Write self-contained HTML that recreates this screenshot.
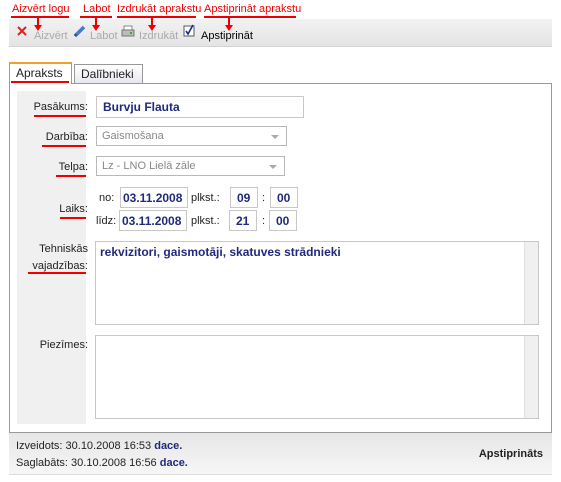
<!DOCTYPE html><html><head><meta charset="utf-8"><style>
*{margin:0;padding:0;box-sizing:border-box}
body{width:561px;height:482px;background:#fff;font-family:"Liberation Sans",sans-serif;font-size:11px;position:relative;overflow:hidden;color:#000}
.a{position:absolute}
.r{color:#e00;font-size:11px}
.ln{background:#e00;height:2px}
.inp{position:absolute;background:#fff;border:1px solid #c8c8c8;color:#1f2a7a;font-weight:bold;font-size:12px;padding:3px 6px}
.lb{position:absolute;right:0;text-align:right;color:#222;font-size:11px}
.sel{position:absolute;border:1px solid #b8b8b8;background:#fff;color:#888;font-size:11px;padding:3px 5px}
.sel:after{content:"";position:absolute;right:7px;top:8px;border:4px solid transparent;border-top:4px solid #aaa}
.sb{position:absolute;right:0;top:0;bottom:0;width:14px;background:#f0f0f0;border-left:1px solid #e0e0e0}
</style></head><body>
<div class="a r" style="left:12px;top:3px">Aizvērt logu</div>
<div class="a ln" style="left:11px;top:16px;width:58px"></div>
<div class="a r" style="left:83px;top:3px">Labot</div>
<div class="a ln" style="left:80px;top:16px;width:32px"></div>
<div class="a r" style="left:117px;top:3px">Izdrukāt aprakstu</div>
<div class="a ln" style="left:117px;top:16px;width:79px"></div>
<div class="a r" style="left:204px;top:3px">Apstiprināt aprakstu</div>
<div class="a ln" style="left:204px;top:16px;width:92px"></div>
<div class="a" style="left:9px;top:19px;width:543px;height:28px;background:linear-gradient(#f2f2f2,#e4e4e4);border-bottom:1px solid #d4d4d4"></div>
<div class="a" style="left:37px;top:17px;width:2px;height:10px;background:#e00"></div><div class="a" style="left:34px;top:25px;border:4px solid transparent;border-top:6px solid #e00"></div>
<div class="a" style="left:95px;top:17px;width:2px;height:10px;background:#e00"></div><div class="a" style="left:92px;top:25px;border:4px solid transparent;border-top:6px solid #e00"></div>
<div class="a" style="left:151px;top:17px;width:2px;height:10px;background:#e00"></div><div class="a" style="left:148px;top:25px;border:4px solid transparent;border-top:6px solid #e00"></div>
<div class="a" style="left:228px;top:17px;width:2px;height:10px;background:#e00"></div><div class="a" style="left:225px;top:25px;border:4px solid transparent;border-top:6px solid #e00"></div>
<svg class="a" style="left:16px;top:25px" width="12" height="12"><path d="M2 2L10 10M10 2L2 10" stroke="#d22" stroke-width="2"/></svg>
<div class="a" style="left:34px;top:30px;color:#aaa">Aizvērt</div>
<svg class="a" style="left:73px;top:24px" width="14" height="14"><path d="M2 12L11 3" stroke="#4a7ad0" stroke-width="3.5"/><path d="M2 12L3 10" stroke="#444" stroke-width="2"/></svg>
<div class="a" style="left:90px;top:30px;color:#aaa">Labot</div>
<svg class="a" style="left:121px;top:25px" width="14" height="13"><rect x="3" y="1" width="8" height="5" fill="#fff" stroke="#888"/><rect x="1" y="5" width="12" height="6" fill="#bbb" stroke="#777"/><rect x="9" y="7" width="2" height="2" fill="#3a3"/></svg>
<div class="a" style="left:139px;top:30px;color:#aaa">Izdrukāt</div>
<svg class="a" style="left:183px;top:24px" width="12" height="13"><rect x="1" y="2" width="10" height="10" fill="#fff" stroke="#556"/><path d="M3 7L5 10L10 1" stroke="#1a2a8a" stroke-width="1.6" fill="none"/></svg>
<div class="a" style="left:201px;top:30px;color:#000">Apstiprināt</div>
<div class="a" style="left:9px;top:62px;width:63px;height:22px;background:#fff;border:1px solid #999;border-top:2px solid #f0a030;border-bottom:none;z-index:2"></div>
<div class="a" style="left:16px;top:66px;z-index:3;font-size:12px;color:#222">Apraksts</div>
<div class="a ln" style="left:11px;top:81px;width:58px;z-index:3"></div>
<div class="a" style="left:74px;top:64px;width:69px;height:20px;background:linear-gradient(#fff,#e6e6f0);border:1px solid #999;border-bottom:none"></div>
<div class="a" style="left:81px;top:67px;font-size:12px;color:#222">Dalībnieki</div>
<div class="a" style="left:9px;top:83px;width:543px;height:350px;border:1px solid #999"></div>
<div class="a" style="left:17px;top:91px;width:69px;height:333px;background:#f0f0f0">
<div class="lb" style="top:10px;right:-2px">Pasākums:</div>
<div class="a ln" style="left:17px;top:24px;width:52px"></div>
<div class="lb" style="top:40px;right:-2px">Darbība:</div>
<div class="a ln" style="left:25px;top:54px;width:44px"></div>
<div class="lb" style="top:70px;right:-2px">Telpa:</div>
<div class="a ln" style="left:39px;top:84px;width:30px"></div>
<div class="lb" style="top:112px;right:-2px">Laiks:</div>
<div class="a ln" style="left:43px;top:126px;width:26px"></div>
<div class="lb" style="top:150px;right:-2px;line-height:17px">Tehniskās<br>vajadzības:</div>
<div class="a ln" style="left:11px;top:181px;width:58px"></div>
<div class="lb" style="top:248px;right:-2px">Piezīmes:</div>
</div>
<div class="inp" style="left:96px;top:96px;width:208px;height:22px">Burvju Flauta</div>
<div class="sel" style="left:96px;top:126px;width:191px;height:20px">Gaismošana</div>
<div class="sel" style="left:96px;top:156px;width:189px;height:20px">Lz - LNO Lielā zāle</div>
<div class="a" style="left:99px;top:192px;color:#222">no:</div>
<div class="inp" style="left:120px;top:187px;width:68px;height:21px;padding:3px 2px">03.11.2008</div>
<div class="a" style="left:191px;top:192px;color:#222">plkst.:</div>
<div class="inp" style="left:230px;top:187px;width:28px;height:21px">09</div>
<div class="a" style="left:262px;top:192px;color:#222">:</div>
<div class="inp" style="left:270px;top:187px;width:28px;height:21px">00</div>
<div class="a" style="left:96px;top:215px;color:#222">līdz:</div>
<div class="inp" style="left:119px;top:210px;width:68px;height:21px;padding:3px 2px">03.11.2008</div>
<div class="a" style="left:191px;top:215px;color:#222">plkst.:</div>
<div class="inp" style="left:229px;top:210px;width:28px;height:21px">21</div>
<div class="a" style="left:262px;top:215px;color:#222">:</div>
<div class="inp" style="left:269px;top:210px;width:28px;height:21px">00</div>
<div class="inp" style="left:95px;top:241px;width:444px;height:84px;padding:3px 4px">rekvizitori, gaismotāji, skatuves strādnieki<div class="sb"></div></div>
<div class="inp" style="left:95px;top:335px;width:444px;height:84px"><div class="sb"></div></div>
<div class="a" style="left:9px;top:433px;width:543px;height:42px;background:linear-gradient(#e6e6e6,#f6f6f6);border-bottom:1px solid #ddd"></div>
<div class="a" style="left:16px;top:440px;font-size:11px;color:#222">Izveidots: 30.10.2008 16:53 <b style="color:#1f2a7a">dace.</b></div>
<div class="a" style="left:16px;top:457px;font-size:11px;color:#222">Saglabāts: 30.10.2008 16:56 <b style="color:#1f2a7a">dace.</b></div>
<div class="a" style="right:18px;top:448px;font-size:11px;font-weight:bold;color:#222">Apstiprināts</div>
</body></html>
